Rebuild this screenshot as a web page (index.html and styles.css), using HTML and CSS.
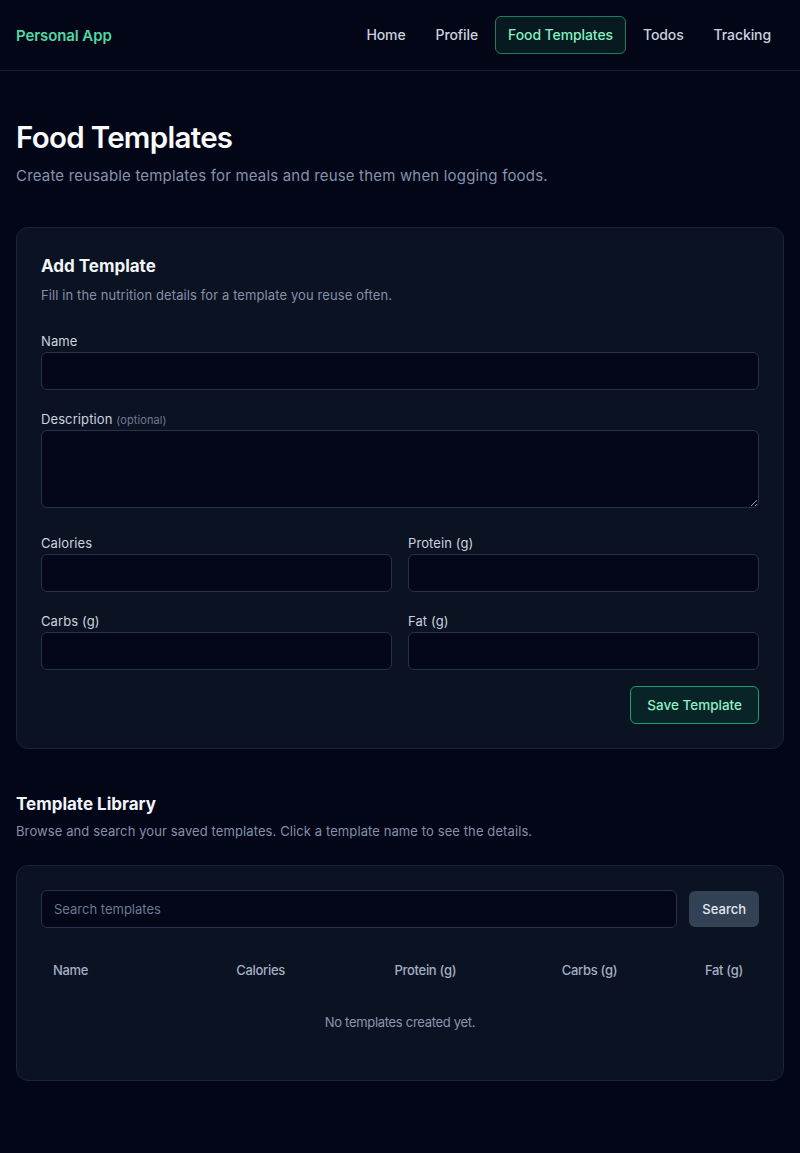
FILE: index.html
```html
<!DOCTYPE html>
<html lang="en">
<head>
<meta charset="utf-8">
<title>Food Templates</title>
<link rel="stylesheet" href="styles.css">
</head>
<body>
<header class="nav">
  <a class="brand" href="#">Personal App</a>
  <nav class="links">
    <a class="link" href="#">Home</a>
    <a class="link" href="#">Profile</a>
    <a class="link active" href="#">Food Templates</a>
    <a class="link" href="#">Todos</a>
    <a class="link" href="#">Tracking</a>
  </nav>
</header>
<main class="page">
  <section class="intro">
    <h1 class="title">Food Templates</h1>
    <p class="subtitle">Create reusable templates for meals and reuse them when logging foods.</p>
  </section>

  <section class="card form-card">
    <h2 class="card-title">Add Template</h2>
    <p class="card-desc">Fill in the nutrition details for a template you reuse often.</p>
    <form class="form">
      <div class="field">
        <label class="label">Name</label>
        <input class="input" type="text">
      </div>
      <div class="field">
        <label class="label">Description <span class="opt">(optional)</span></label>
        <textarea class="input textarea"></textarea>
      </div>
      <div class="grid">
        <div class="field">
          <label class="label">Calories</label>
          <input class="input" type="text">
        </div>
        <div class="field">
          <label class="label">Protein (g)</label>
          <input class="input" type="text">
        </div>
        <div class="field">
          <label class="label">Carbs (g)</label>
          <input class="input" type="text">
        </div>
        <div class="field">
          <label class="label">Fat (g)</label>
          <input class="input" type="text">
        </div>
      </div>
      <div class="actions">
        <button class="btn-primary" type="button">Save Template</button>
      </div>
    </form>
  </section>

  <section class="library">
    <h2 class="section-title">Template Library</h2>
    <p class="section-desc">Browse and search your saved templates. Click a template name to see the details.</p>
    <div class="card lib-card">
      <div class="search-row">
        <input class="input search" type="text" placeholder="Search templates">
        <button class="btn-secondary" type="button">Search</button>
      </div>
      <table class="table">
        <thead>
          <tr>
            <th class="c1">Name</th>
            <th class="c2">Calories</th>
            <th class="c3">Protein (g)</th>
            <th class="c4">Carbs (g)</th>
            <th class="c5">Fat (g)</th>
          </tr>
        </thead>
        <tbody>
          <tr><td class="empty" colspan="5">No templates created yet.</td></tr>
        </tbody>
      </table>
    </div>
  </section>
</main>
</body>
</html>
```

FILE: styles.css
```css
* { box-sizing: border-box; }
html, body { margin: 0; padding: 0; }
body {
  background: #030617;
  color: #e2e8f0;
  font-family: Inter, "Noto Sans", "Liberation Sans", sans-serif;
  min-height: 1153px;
}
a { text-decoration: none; }

.nav {
  height: 71px;
  display: flex;
  align-items: center;
  justify-content: space-between;
  padding: 0 16px 0 16px;
  border-bottom: 1px solid #172033;
}
.brand {
  color: #4fd8a2;
  font-size: 15px;
  font-weight: 600;
  letter-spacing: -0.1px;
}
.links { display: flex; align-items: center; gap: 4px; }
.link {
  color: #cbd2df;
  font-size: 14px;
  font-weight: 500;
  padding: 9px 12px;
  border: 1px solid transparent;
  border-radius: 6px;
  line-height: 18px;
  letter-spacing: -0.1px;
}
.link.active {
  color: #86efc0;
  background: #061a1f;
  border-color: #15825e;
}

.page { padding: 0 16px 70px; }
.intro { padding-top: 48px; }
.title {
  margin: 0;
  font-size: 29.5px;
  font-weight: 600;
  letter-spacing: -0.7px;
  color: #f8fafc;
  line-height: 36px;
}
.subtitle {
  margin: 10px 0 0;
  font-size: 15px;
  color: #8593ab;
  line-height: 22px;
  letter-spacing: 0.18px;
}

.card {
  background: #0b1222;
  border: 1px solid #1b2538;
  border-radius: 12px;
  padding: 24px;
}
.form-card { margin-top: 40px; padding-top: 27px; }
.card-title {
  margin: 0;
  font-size: 17px;
  font-weight: 700;
  color: #f1f5f9;
  line-height: 22px;
}
.card-desc {
  margin: 8px 0 0;
  font-size: 13px;
  color: #8391a8;
  line-height: 20px;
  letter-spacing: 0.1px;
}
.form { margin-top: 28px; display: flex; flex-direction: column; gap: 21px; }
.field { display: flex; flex-direction: column; gap: 2px; }
.label {
  font-size: 13px;
  color: #cbd3df;
  line-height: 17px;
  height: 17px;
  letter-spacing: 0.1px;
}
.opt { font-size: 11px; color: #6b7a92; line-height: 1; }
.input {
  height: 38px;
  width: 100%;
  background: #030717;
  border: 1px solid #273347;
  border-radius: 6px;
  color: #e2e8f0;
  font-family: inherit;
  font-size: 14px;
  padding: 0 12px;
  outline: none;
}
.textarea { height: 78px; resize: vertical; display: block; padding: 8px 12px; }
.grid {
  display: grid;
  grid-template-columns: 1fr 1fr;
  column-gap: 16px;
  row-gap: 21px;
  margin-top: 6px;
}
.actions { display: flex; justify-content: flex-end; margin-top: -5px; }
.btn-primary {
  height: 38px;
  padding: 0 16px;
  background: #082427;
  border: 1px solid #15a06e;
  border-radius: 6px;
  color: #8ef0c4;
  font-family: inherit;
  font-size: 13.5px;
  font-weight: 500;
}

.library { margin-top: 44px; }
.section-title {
  margin: 0;
  font-size: 17px;
  font-weight: 700;
  color: #f1f5f9;
  line-height: 22px;
}
.section-desc {
  margin: 6px 0 0;
  font-size: 13px;
  color: #8391a8;
  line-height: 20px;
  letter-spacing: 0.1px;
}
.lib-card { margin-top: 24px; padding-bottom: 24px; }
.search-row { display: flex; gap: 12px; align-items: center; }
.search { flex: 1; font-size: 13px; }
.search::placeholder { color: #6b7990; }
.btn-secondary {
  height: 36px;
  padding: 0 13px;
  background: #334155;
  border: none;
  border-radius: 6px;
  color: #e2e8f0;
  font-family: inherit;
  font-size: 13px;
  font-weight: 500;
}
.table {
  width: 100%;
  margin-top: 20px;
  border-collapse: collapse;
  table-layout: fixed;
}
.table th {
  text-align: left;
  font-size: 13px;
  font-weight: 500;
  color: #a3afc2;
  padding: 12px;
  line-height: 20px;
  letter-spacing: -0.3px;
}
.c1 { width: 183px; }
.c2 { width: 158px; }
.c3 { width: 167px; }
.c4 { width: 143px; }
.c5 { width: 66px; }
.table td.empty {
  text-align: center;
  font-size: 13px;
  color: #8a97ac;
  padding: 20px 12px 24px;
  line-height: 20px;
  letter-spacing: -0.3px;
}
```
